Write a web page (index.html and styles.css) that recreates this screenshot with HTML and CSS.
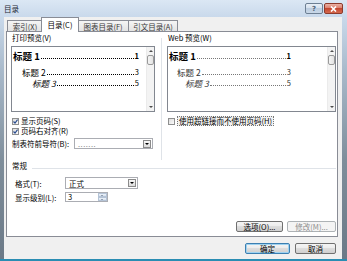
FILE: index.html
```html
<!DOCTYPE html>
<html lang="zh-CN">
<head>
    <meta charset="UTF-8">
    <meta name="viewport" content="width=device-width, initial-scale=1.0">
    <title>目录</title>

<link rel="stylesheet" href="styles.css">

</head>
<body>

<div class="window">
    <div class="titlebar">
        <div class="title">目录</div>
        <div class="caption">
            <div class="cap-btn help">?</div>
            <div class="cap-btn close">
                <svg width="7" height="6" viewBox="0 0 7 6"><path d="M1 0.5 L6 5.5 M6 0.5 L1 5.5" stroke="#fff" stroke-width="1.6"/></svg>
            </div>
        </div>
    </div>

    <div class="client">
        <div class="tabs">
            <div class="tab t1">索引(X)</div>
            <div class="tab t2 active">目录(C)</div>
            <div class="tab t3">图表目录(F)</div>
            <div class="tab t4">引文目录(A)</div>
        </div>

        <div class="panel">
            <div class="previews">
                <div class="col col-print">
                    <div class="label">打印预览(<u>V</u>)</div>
                    <div class="preview">
                        <div class="toc toc-print">
                            <div class="entry lv1"><span class="name">标题 1</span><span class="dots"></span><span class="pg">1</span></div>
                            <div class="entry lv2"><span class="name">标题 2</span><span class="dots"></span><span class="pg">3</span></div>
                            <div class="entry lv3"><span class="name">标题 3</span><span class="dots"></span><span class="pg">5</span></div>
                        </div>
                        <div class="scroll">
                            <div class="arrow up"></div>
                            <div class="thumb"></div>
                            <div class="track"></div>
                            <div class="arrow down"></div>
                        </div>
                    </div>
                    <div class="check first"><span class="cb checked"><svg width="5" height="5" viewBox="0 0 5 5"><path d="M0.5 2.5 L2 4 L4.6 0.6" fill="none" stroke="#2a4d8f" stroke-width="1.2"/></svg></span>显示页码(<u>S</u>)</div>
                    <div class="check"><span class="cb checked"><svg width="5" height="5" viewBox="0 0 5 5"><path d="M0.5 2.5 L2 4 L4.6 0.6" fill="none" stroke="#2a4d8f" stroke-width="1.2"/></svg></span>页码右对齐(<u>R</u>)</div>
                    <div class="field leader">
                        <span class="field-label">制表符前导符(<u>B</u>):</span>
                        <div class="combo wide"><span class="combo-text muted">.......</span><span class="combo-btn"></span></div>
                    </div>
                </div>

                <div class="vsep"></div>

                <div class="col col-web">
                    <div class="label">Web 预览(<u>W</u>)</div>
                    <div class="preview">
                        <div class="toc toc-web">
                            <div class="entry lv1"><span class="name">标题 1</span><span class="dots"></span><span class="pg">1</span></div>
                            <div class="entry lv2"><span class="name">标题 2</span><span class="dots"></span><span class="pg">3</span></div>
                            <div class="entry lv3"><span class="name">标题 3</span><span class="dots"></span><span class="pg">5</span></div>
                        </div>
                        <div class="scroll">
                            <div class="arrow up"></div>
                            <div class="thumb"></div>
                            <div class="track"></div>
                            <div class="arrow down"></div>
                        </div>
                    </div>
                    <div class="check first"><span class="cb"></span><span class="focus">使用超链接而不使用页码(<u>H</u>)</span></div>
                </div>
            </div>

            <div class="group-head"><span>常规</span><span class="group-line"></span></div>

            <div class="field row-format">
                <span class="field-label">格式(<u>T</u>):</span>
                <div class="combo"><span class="combo-text">正式</span><span class="combo-btn"></span></div>
            </div>
            <div class="field row-level">
                <span class="field-label">显示级别(<u>L</u>):</span>
                <div class="spin"><span class="spin-text">3</span><span class="spin-btns"><span class="spin-up"></span><span class="spin-down"></span></span></div>
            </div>

            <div class="panel-btns">
                <button class="btn b-options">选项(<u>O</u>)...</button>
                <button class="btn b-modify" disabled>修改(<u>M</u>)...</button>
            </div>
        </div>

        <div class="dialog-btns">
            <button class="btn default b-ok">确定</button>
            <button class="btn b-cancel">取消</button>
        </div>
    </div>
</div>

</body>
</html>
```

FILE: styles.css
```css
* {
    box-sizing: border-box;
}

body {
    margin: 0;
    width: 347px;
    height: 261px;
    overflow: hidden;
    font-family: "Noto Sans CJK SC", "Noto Sans", sans-serif;
    font-size: 7.5px;
    color: #000;
    background: #6d7c8a;
}

u {
    text-decoration: none;
}

.window {
    width: 347px;
    height: 261px;
    display: flex;
    flex-direction: column;
    padding: 0 5px 0 4px;
    border-bottom: 2px solid #2a8db3;
    background: linear-gradient(to bottom, #dbe7f4 0px, #c9d9eb 17px, #a9bacb 70px, #7f8e9b 160px, #6b7987 100%);
}

/* title bar */
.titlebar {
    height: 17px;
    display: flex;
    align-items: flex-start;
    justify-content: space-between;
}

.title {
    margin-top: 4px;
    line-height: 9px;
    color: #1e2a36;
}

.caption {
    display: flex;
    margin-top: 3px;
    margin-right: -1px;
}

.cap-btn {
    height: 11px;
    border: 1px solid #6d7f93;
    border-radius: 2px;
    display: flex;
    align-items: center;
    justify-content: center;
}

.help {
    width: 18px;
    margin-right: 1px;
    font-family: "DejaVu Sans", sans-serif;
    font-size: 7px;
    font-weight: bold;
    color: #4f6379;
    background: linear-gradient(#e8eff7 0%, #d3dfec 50%, #bccde0 50%, #c9d8e8 100%);
}

.close {
    width: 19px;
    border-color: #8d3a2c;
    background: linear-gradient(#eab2a4 0%, #d9796a 50%, #c4462f 50%, #d46a4f 100%);
}

/* client area */
.client {
    flex: 1;
    background: #f0f0f0;
    display: flex;
    flex-direction: column;
}

.tabs {
    height: 14px;
    padding-left: 3px;
    display: flex;
    align-items: flex-end;
}

.tab {
    height: 11px;
    border: 1px solid #898c95;
    border-bottom: 0;
    background: linear-gradient(#f5f5f5, #e3e3e3);
    display: flex;
    align-items: center;
    justify-content: center;
    line-height: 9px;
    color: #3a3a3a;
}

.t1 { width: 36px; }
.t3 { width: 52px; }
.t4 { width: 50px; margin-left: -1px; }

.tab.active {
    width: 38px;
    height: 15px;
    margin: 0 -2px -1px;
    padding-bottom: 2px;
    background: #fff;
    color: #000;
    position: relative;
    z-index: 1;
}

.panel {
    margin-left: 2px;
    width: 332px;
    height: 206px;
    border: 1px solid #898c95;
    background: #fff;
}

.previews {
    display: flex;
    height: 128px;
}

.col-print {
    width: 144px;
    margin-left: 4px;
}

.col-web {
    width: 169px;
}

.vsep {
    width: 1px;
    margin: 6px 5px 0 6px;
    background: #dfe3e8;
}

.label {
    height: 10px;
    line-height: 10px;
    margin-top: 1px;
    padding-left: 1px;
}

.preview {
    margin-top: 3px;
    height: 66px;
    border: 1px solid #828790;
    display: flex;
}

.toc {
    flex: 1;
    padding-top: 4px;
}

.toc-print {
    padding-left: 1px;
    padding-right: 7px;
}

.toc-web {
    padding-left: 1px;
    padding-right: 36px;
}

.entry {
    display: flex;
    align-items: flex-end;
    height: 10px;
    line-height: 10px;
}

.entry .name {
    white-space: pre;
}

.entry .dots {
    flex: 1;
    margin: 0 1px 2px;
    border-bottom: 1px dotted #000;
}

.lv1 .name {
    font-size: 9.5px;
    font-weight: bold;
}

.lv1 .pg {
    font-weight: bold;
}

.lv2 {
    margin-top: 6px;
    padding-left: 9px;
}

.lv3 {
    margin-top: 1px;
    padding-left: 19px;
}

.lv2 .name,
.lv3 .name {
    font-size: 8.5px;
}

.lv3 .name {
    font-style: italic;
}

.toc-web .dots {
    border-bottom-color: #777;
}

.toc-web .lv2,
.toc-web .lv3 {
    color: #333;
}

.toc-web .lv2 { padding-left: 8px; }
.toc-web .lv3 { padding-left: 16px; }

/* scrollbar */
.scroll {
    width: 8px;
    display: flex;
    flex-direction: column;
    background: #f3f3f3;
    border-left: 1px solid #ebebeb;
}

.arrow {
    height: 8px;
    position: relative;
}

.arrow::after {
    content: "";
    position: absolute;
    left: 2px;
    top: 3px;
    border-left: 2px solid transparent;
    border-right: 2px solid transparent;
}

.arrow.up::after {
    border-bottom: 2px solid #4d4d4d;
}

.arrow.down::after {
    border-top: 2px solid #4d4d4d;
}

.thumb {
    height: 10px;
    border: 1px solid #9a9a9a;
    border-radius: 2px;
    background: linear-gradient(to right, #f4f4f4, #e3e3e3);
}

.track {
    flex: 1;
}

/* checkboxes */
.check {
    display: flex;
    align-items: center;
    height: 10px;
    line-height: 10px;
    white-space: nowrap;
}

.check.first {
    margin-top: 4px;
}

.cb {
    width: 7px;
    height: 7px;
    margin: 0 2px 0 1px;
    border: 1px solid #8e8f8f;
    background: linear-gradient(135deg, #dcdcdc, #fbfbfb);
    display: flex;
    align-items: center;
    justify-content: center;
}

.col-web .cb {
    margin-left: 1px;
}

.focus {
    height: 10px;
    padding: 0 1px;
    line-height: 10px;
    border: 1px dotted #777;
    background: #f2f2f2;
    display: flex;
    align-items: center;
}

/* fields */
.field {
    display: flex;
    align-items: center;
    white-space: nowrap;
}

.leader {
    margin-top: 2px;
    height: 11px;
    padding-left: 1px;
}

.leader .field-label {
    width: 62px;
}

.combo {
    display: flex;
    align-items: center;
    height: 100%;
    border: 1px solid #abadb3;
    background: #fff;
    width: 73px;
}

.combo.wide {
    width: 79px;
}

.combo-text {
    flex: 1;
    padding-left: 3px;
    line-height: 9px;
}

.muted {
    color: #8a8a8a;
    letter-spacing: 0.5px;
}

.combo-btn {
    width: 8px;
    height: 8px;
    margin-right: 1px;
    border: 1px solid #8b8b8b;
    background: linear-gradient(#f7f7f7, #dcdcdc);
    position: relative;
}

.combo-btn::after {
    content: "";
    position: absolute;
    left: 1px;
    top: 2px;
    border-left: 2px solid transparent;
    border-right: 2px solid transparent;
    border-top: 2px solid #000;
}

.group-head {
    display: flex;
    height: 10px;
    line-height: 10px;
    margin-top: 1px;
    padding-left: 5px;
}

.group-line {
    flex: 1;
    align-self: flex-end;
    height: 1px;
    margin: 0 1px 2px 5px;
    background: #dfe3e8;
}

.row-format {
    margin-top: 6px;
    height: 12px;
    padding-left: 8px;
}

.row-format .field-label,
.row-level .field-label {
    width: 50px;
}

.row-level {
    margin-top: 3px;
    height: 10px;
    padding-left: 8px;
}

.spin {
    display: flex;
    height: 100%;
    width: 43px;
    border: 1px solid #abadb3;
    background: #fff;
}

.spin-text {
    flex: 1;
    padding-left: 2px;
    line-height: 8px;
}

.spin-btns {
    width: 9px;
    display: flex;
    flex-direction: column;
}

.spin-up,
.spin-down {
    flex: 1;
    border: 1px solid #b4c3d6;
    background: linear-gradient(#eef3f9, #d5e0ee);
    position: relative;
}

.spin-up::after,
.spin-down::after {
    content: "";
    position: absolute;
    left: 2px;
    top: 1px;
    border-left: 1.5px solid transparent;
    border-right: 1.5px solid transparent;
}

.spin-up::after { border-bottom: 1.5px solid #4a5a70; }
.spin-down::after { border-top: 1.5px solid #4a5a70; }

/* buttons */
.btn {
    height: 11px;
    padding: 0;
    border: 1px solid #707070;
    border-radius: 2px;
    font-family: inherit;
    font-size: 7.5px;
    line-height: 9px;
    color: #000;
    background: linear-gradient(#f4f4f4 0%, #ebebeb 50%, #dddddd 50%, #cfcfcf 100%);
}

.btn:disabled {
    border-color: #adb2b5;
    background: #f4f4f4;
    color: #8d8d8d;
}

.btn.default {
    border-color: #3c7fb1;
    box-shadow: inset 0 0 0 1px #9fd2f0;
}

.panel-btns {
    margin-top: 19px;
    display: flex;
    justify-content: flex-end;
    gap: 4px;
    padding-right: 1px;
}

.b-options { width: 47px; }
.b-modify { width: 49px; }

.dialog-btns {
    margin-top: 6px;
    display: flex;
    justify-content: flex-end;
    gap: 5px;
    padding-right: 6px;
}

.b-ok { width: 45px; }
.b-cancel { width: 41px; }
```
